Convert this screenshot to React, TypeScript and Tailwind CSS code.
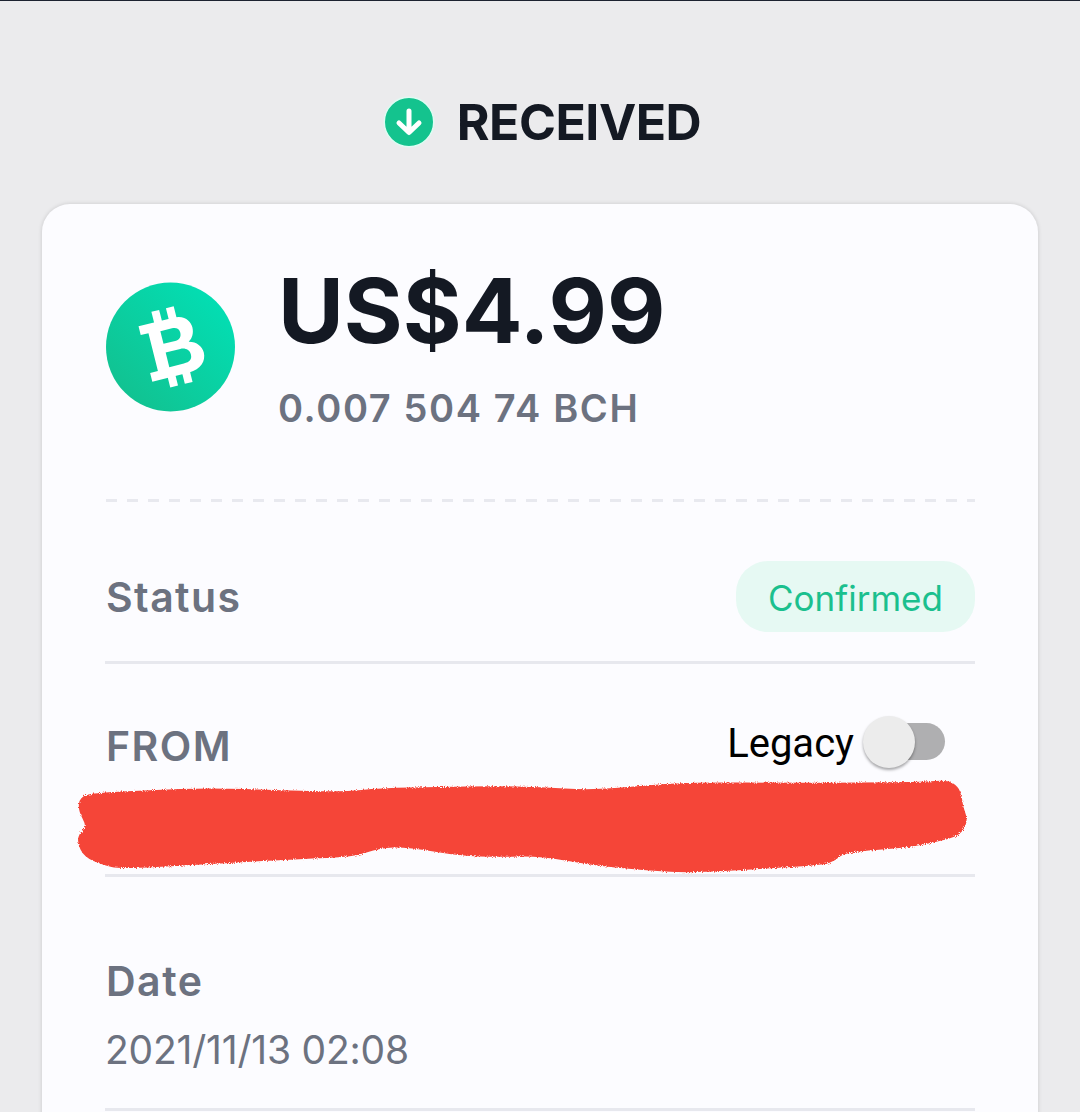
const pts: [number, number][] = [
  [80,797],[93,793],[150,790],[210,788],[280,790],[343,792],[380,788],[440,787],[493,786],[540,787],[590,790],[640,786],[690,782],[800,783],[923,782],[947,780],[958,786],[962,797],[963,807],[968,820],[962,833],[950,839],[907,848],[845,852],[835,861],[823,865],[760,869],[690,873],[640,870],[590,865],[540,856],[500,857],[460,856],[407,847],[380,848],[353,857],[300,859],[193,865],[120,869],[103,865],[84,857],[77,842],[80,832],[87,827],[78,810],
];
const scribble = (() => {
  const n = pts.length;
  const mid = (a: [number, number], b: [number, number]) => `${(a[0] + b[0]) / 2},${(a[1] + b[1]) / 2}`;
  let d = `M${mid(pts[n - 1], pts[0])}`;
  for (let i = 0; i < n; i++) d += ` Q${pts[i][0]},${pts[i][1]} ${mid(pts[i], pts[(i + 1) % n])}`;
  return d + "Z";
})();

const inter = "font-['Inter','Liberation_Sans',sans-serif]";

function BchLogo() {
  return (
    <svg width="130" height="130" viewBox="0 0 130 130" className="shrink-0">
      <defs>
        <linearGradient id="g" x1="0" y1="1" x2="1" y2="0">
          <stop offset="0" stopColor="#14bd8b" />
          <stop offset="1" stopColor="#00e3b9" />
        </linearGradient>
      </defs>
      <circle cx="64.5" cy="65" r="64.5" fill="url(#g)" />
      <g transform="translate(65.5 65) rotate(-14)" fill="#fff">
        <path
          fillRule="evenodd"
          d="M-27,-28 H9 C21,-28 25,-20 25,-14 C25,-8 22,-3 18,-1 C26,1 30,7 30,13 C30,22 23,29 11,29 H-27 V20 H-19 V-19 H-27Z M-7,-18 V-5 H5 C10,-5 12,-8 12,-12 C12,-16 9,-18 5,-18Z M-7,4 V19 H8 C14,19 17,17 17,12 C17,7 13,4 8,4Z"
        />
        <rect x="-11" y="-39" width="8" height="12" />
        <rect x="4" y="-39" width="8" height="12" />
        <rect x="-11" y="28" width="8" height="11" />
        <rect x="4" y="28" width="8" height="11" />
      </g>
    </svg>
  );
}

export default function App() {
  return (
    <div className={`${inter} relative h-[1112px] w-[1080px] overflow-hidden bg-[#ebebed]`}>
      <div className="h-px bg-[#1c2230]" />
      <header className="flex h-[203px] items-center justify-center gap-[22px] pl-[4px] pt-[39px]">
        <svg width="52" height="52" viewBox="0 0 52 52">
          <circle cx="26" cy="26" r="24.75" fill="#14c38e" stroke="#defcf3" strokeWidth="1.5" />
          <path d="M26 15 V36 M16 27 L26 36.5 L36 27" fill="none" stroke="#fff" strokeWidth="5" strokeLinecap="round" strokeLinejoin="round" />
        </svg>
        <h1 className="text-[50px] font-bold leading-none tracking-[-0.5px] text-[#141923]">RECEIVED</h1>
      </header>

      <main className="mx-[42px] h-[1000px] rounded-[28px] bg-[#fcfcff] px-[63px] shadow-[0_0_4px_rgba(0,0,0,0.15)]">
        <section className="flex h-[295px] items-start gap-[42px] pl-px">
          <div className="pt-[78px]"><BchLogo /></div>
          <div className="pt-[59px]">
            <div className="text-[90px] font-bold leading-[96px] text-[#141923]">US$4.99</div>
            <div className="mt-[27px] text-[38px] font-[560] leading-[44px] tracking-[1.6px] text-[#6c7280]">0.007 504 74 BCH</div>
          </div>
        </section>
        <div className="ml-px h-[3px] bg-[repeating-linear-gradient(90deg,#e8e9ef_0,#e8e9ef_11px,transparent_11px,transparent_21px)]" />

        <section className="flex h-[162px] items-center justify-between border-b-[3px] border-[#e7e8ee] pt-[30px]">
          <span className="ml-px mt-[2px] text-[41px] font-semibold leading-none tracking-[1.4px] text-[#6c7280]">Status</span>
          <span className="flex h-[71px] w-[239px] items-center justify-center rounded-[32px] bg-[#e6f9f3] pt-[3px] text-[35px] text-[#1bc08e]">Confirmed</span>
        </section>

        <section className="h-[213px] border-b-[3px] border-[#e7e8ee] pt-[59px]">
          <div className="flex items-center justify-between pr-[30px]">
            <span className="ml-px text-[41px] font-semibold leading-[46px] tracking-[1.5px] text-[#6c7280]">FROM</span>
            <div className="mt-[-10px] flex items-center gap-[9px]">
              <span className="mt-[6px] font-['Roboto',sans-serif] text-[40px] leading-[46px] text-black">Legacy</span>
              <div className="relative h-[37px] w-[82px]">
                <div className="absolute right-0 top-0 h-[37px] w-[68px] rounded-full bg-[#afafb1]" />
                <div className="absolute left-0 top-[-7px] h-[52px] w-[52px] rounded-full bg-[#ececec] shadow-[0_2px_3px_rgba(0,0,0,0.35)]" />
              </div>
            </div>
          </div>
        </section>

        <section className="h-[234px] border-b-[3px] border-[#e7e8ee] pt-[81px]">
          <div className="ml-px text-[41px] font-semibold leading-[46px] tracking-[1.5px] text-[#6c7280]">Date</div>
          <div className="mt-[23px] text-[39px] leading-[46px] tracking-[-0.2px] text-[#6c7280]">2021/11/13 02:08</div>
        </section>
      </main>

      <svg width="1080" height="1112" viewBox="0 0 1080 1112" className="pointer-events-none absolute left-0 top-0">
        <defs>
          <filter id="rough" x="-5%" y="-20%" width="110%" height="140%">
            <feTurbulence type="fractalNoise" baseFrequency="0.9" numOctaves="2" seed="3" />
            <feDisplacementMap in="SourceGraphic" scale="4" />
            <feGaussianBlur stdDeviation="0.5" />
          </filter>
        </defs>
        <path d={scribble} fill="#f54438" filter="url(#rough)" />
      </svg>
    </div>
  );
}
